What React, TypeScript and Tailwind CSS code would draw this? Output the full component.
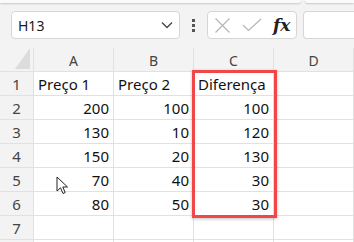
import React from "react";

const font = { fontFamily: '"Noto Sans", "Open Sans", sans-serif' };

const cols = ["A", "B", "C", "D"];
const rows: (string | number)[][] = [
  ["Preço 1", "Preço 2", "Diferença", ""],
  [200, 100, 100, ""],
  [130, 10, 120, ""],
  [150, 20, 130, ""],
  [70, 40, 30, ""],
  [80, 50, 30, ""],
  ["", "", "", ""],
  ["", "", "", ""],
];

function Cell({ value }: { value: string | number }) {
  const isNum = typeof value === "number";
  return (
    <div
      className={`h-6 border-b border-r border-[#e1e1e1] bg-white px-[4px] pt-[2px] text-[15px] leading-[20px] text-[#111] ${
        isNum ? "text-right" : "text-left"
      }`}
    >
      {value}
    </div>
  );
}

export default function App() {
  return (
    <div className="relative h-[242px] w-[354px] overflow-hidden bg-[#f3f3f3]" style={font}>
      {/* ribbon bottom edge */}
      <div className="flex h-[3px] gap-[4px]">
        <div className="w-[301px] rounded-br-[4px] bg-[#fafafa] shadow-[0_1px_2px_rgba(0,0,0,0.18)]" />
        <div className="flex-1 rounded-bl-[4px] bg-[#fafafa] shadow-[0_1px_2px_rgba(0,0,0,0.18)]" />
      </div>

      {/* formula bar */}
      <div className="mt-[8px] flex h-[28px] items-center">
        <div className="ml-[11px] flex h-[28px] w-[169px] items-center justify-between rounded-[4px] border border-[#d6d6d6] bg-white pl-[6px] pr-[6px]">
          <span className="text-[14px] text-[#1a1a1a]">H13</span>
          <svg width="12" height="8" viewBox="0 0 12 8">
            <path d="M1 1.5 L6 6.5 L11 1.5" fill="none" stroke="#444" strokeWidth="1.3" />
          </svg>
        </div>
        <div className="ml-[12px] flex w-[3px] flex-col gap-[2px]">
          <div className="h-[3px] w-[3px] bg-[#555]" />
          <div className="h-[3px] w-[3px] bg-[#555]" />
          <div className="h-[3px] w-[3px] bg-[#555]" />
        </div>
        <div className="ml-[12px] flex h-[28px] w-[90px] items-center rounded-[4px] border border-[#d6d6d6] bg-white pl-[6px]">
          <svg width="17" height="17" viewBox="0 0 17 17">
            <path d="M1.5 1.5 L15.5 15.5 M15.5 1.5 L1.5 15.5" stroke="#b5b5b5" strokeWidth="1.2" />
          </svg>
          <svg className="ml-[11px]" width="20" height="14" viewBox="0 0 20 14">
            <path d="M1 7 L6.5 12.5 L19 1" fill="none" stroke="#b5b5b5" strokeWidth="1.2" />
          </svg>
          <span
            className="ml-[11px] text-[17px] font-semibold italic leading-none text-[#222]"
            style={{ fontFamily: '"DejaVu Serif", "Liberation Serif", serif' }}
          >
            fx
          </span>
        </div>
        <div className="ml-[6px] h-[28px] flex-1 rounded-l-[4px] border border-r-0 border-[#d6d6d6] bg-white" />
      </div>

      {/* sheet */}
      <div className="relative mt-[9px]">
        <div className="grid grid-cols-[34px_80px_80px_80px_80px]">
          <div className="flex h-6 items-end justify-end border-b border-r border-[#e1e1e1] bg-[#f3f3f3] pb-[1px] pr-[2px]">
            <svg width="16" height="22" viewBox="0 0 16 22">
              <path d="M15 0 L15 21 L0 21 Z" fill="#dcdcdc" />
            </svg>
          </div>
          {cols.map((c) => (
            <div
              key={c}
              className="h-6 border-b border-r border-[#e1e1e1] bg-[#f3f3f3] pt-[3px] text-center text-[14px] leading-[19px] text-[#444]"
            >
              {c}
            </div>
          ))}
          {rows.map((r, i) => (
            <React.Fragment key={i}>
              <div className="h-6 border-b border-r border-[#e1e1e1] bg-[#f3f3f3] pt-[2px] text-center text-[15px] leading-[20px] text-[#444]">
                {i < 7 ? i + 1 : ""}
              </div>
              {r.map((v, j) => (
                <Cell key={j} value={v} />
              ))}
            </React.Fragment>
          ))}
        </div>

        {/* highlight around column C */}
        <div className="absolute left-[192px] top-[22px] h-[148px] w-[85px] border-[3px] border-[#f04848] shadow-[0_1px_3px_rgba(0,0,0,0.25)]" />

        {/* mouse pointer */}
        <svg className="absolute left-[56px] top-[128px]" width="13" height="19" viewBox="0 0 13 19">
          <path
            d="M1 1 L1 15 L4.5 11.8 L7 17.5 L9.2 16.5 L6.8 11 L11.5 11 Z"
            fill="#fff"
            stroke="#222"
            strokeWidth="1"
            strokeLinejoin="round"
          />
        </svg>
      </div>
    </div>
  );
}
